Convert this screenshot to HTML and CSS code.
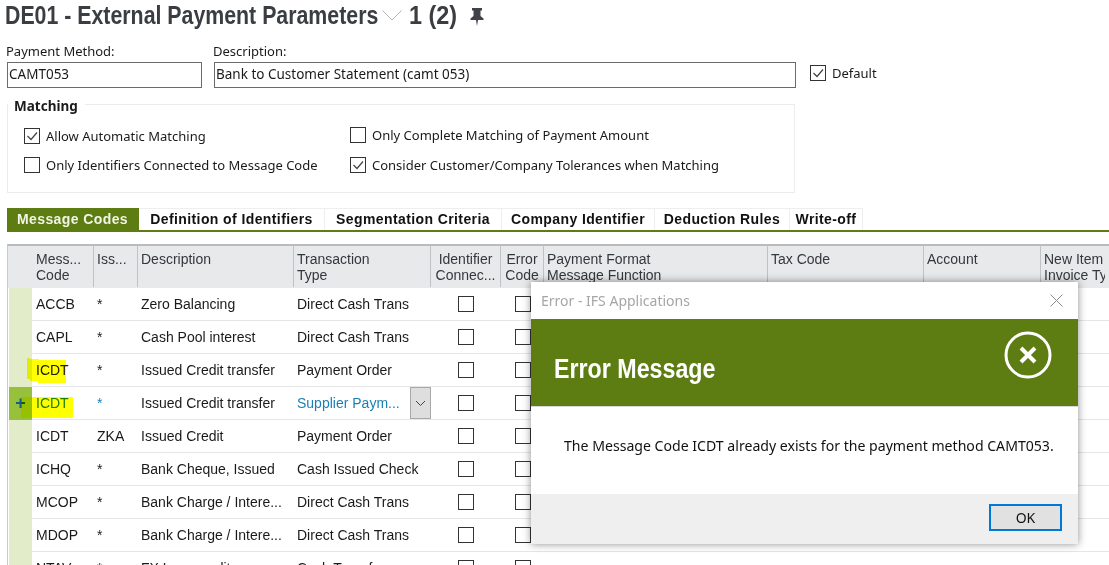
FILE: index.html
```html
<!DOCTYPE html>
<html>
<head>
  <link rel="stylesheet" href="styles.css">
</head>
<body>
  <div class="page">
    <div class="title-bar">
      <h1 class="title title-main">DE01 - External Payment Parameters</h1>
      <svg class="title-chevron" width="20" height="11" viewBox="0 0 20 11"><path d="M0.5 0.5 L10 10 L19.5 0.5" fill="none" stroke="#b5b5b5" stroke-width="1"/></svg>
      <span class="title title-count">1 (2)</span>
      <svg class="title-pin" width="14" height="18" viewBox="0 0 14 18"><path d="M2 0 H12 V2.5 H10.5 V8 L13.5 10.5 V12 H8 L7 18 L6 12 H0.5 V10.5 L3.5 8 V2.5 H2 Z" fill="#3f4246"/></svg>
    </div>

    <div class="head-form">
      <div class="field field-method">
        <label>Payment Method:</label>
        <div class="input">CAMT053</div>
      </div>
      <div class="field field-desc">
        <label>Description:</label>
        <div class="input">Bank to Customer Statement (camt 053)</div>
      </div>
      <div class="check default-check">
        <span class="cb"><svg width="14" height="14" viewBox="0 0 14 14"><path d="M2.5 7 L6 10.5 L12 3.5" fill="none" stroke="#444" stroke-width="1.2"/></svg></span>
        <span>Default</span>
      </div>
    </div>

    <div class="matching">
      <div class="legend">Matching</div>
      <div class="matching-cols">
        <div class="matching-col col-left">
          <div class="check">
            <span class="cb"><svg width="14" height="14" viewBox="0 0 14 14"><path d="M2.5 7 L6 10.5 L12 3.5" fill="none" stroke="#444" stroke-width="1.2"/></svg></span>
            <span>Allow Automatic Matching</span>
          </div>
          <div class="check">
            <span class="cb"></span>
            <span>Only Identifiers Connected to Message Code</span>
          </div>
        </div>
        <div class="matching-col col-right">
          <div class="check">
            <span class="cb"></span>
            <span>Only Complete Matching of Payment Amount</span>
          </div>
          <div class="check">
            <span class="cb"><svg width="14" height="14" viewBox="0 0 14 14"><path d="M2.5 7 L6 10.5 L12 3.5" fill="none" stroke="#444" stroke-width="1.2"/></svg></span>
            <span>Consider Customer/Company Tolerances when Matching</span>
          </div>
        </div>
      </div>
    </div>

    <div class="tabs">
      <div class="tab active tab-1">Message Codes</div>
      <div class="tab tab-2">Definition of Identifiers</div>
      <div class="tab tab-3">Segmentation Criteria</div>
      <div class="tab tab-4">Company Identifier</div>
      <div class="tab tab-5">Deduction Rules</div>
      <div class="tab tab-6">Write-off</div>
    </div>

    <div class="grid">
      <div class="grid-row grid-head">
        <div class="gutter"></div>
        <div class="th">Mess...<br>Code</div>
        <div class="th">Iss...</div>
        <div class="th">Description</div>
        <div class="th">Transaction<br>Type</div>
        <div class="th th-center">Identifier<br>Connec...</div>
        <div class="th th-center">Error<br>Code</div>
        <div class="th">Payment Format<br>Message Function</div>
        <div class="th">Tax Code</div>
        <div class="th">Account</div>
        <div class="th th-last">New Item<br>Invoice Type</div>
      </div>

      <div class="grid-row">
        <div class="gutter"></div><div class="td">ACCB</div><div class="td">*</div><div class="td">Zero Balancing</div><div class="td">Direct Cash Trans</div>
        <div class="td td-check"><span class="cb"></span></div><div class="td td-check"><span class="cb"></span></div>
      </div>
      <div class="grid-row">
        <div class="gutter"></div><div class="td">CAPL</div><div class="td">*</div><div class="td">Cash Pool interest</div><div class="td">Direct Cash Trans</div>
        <div class="td td-check"><span class="cb"></span></div><div class="td td-check"><span class="cb"></span></div>
      </div>
      <div class="grid-row">
        <div class="gutter"></div><div class="td">ICDT</div><div class="td">*</div><div class="td">Issued Credit transfer</div><div class="td">Payment Order</div>
        <div class="td td-check"><span class="cb"></span></div><div class="td td-check"><span class="cb"></span></div>
      </div>
      <div class="grid-row row-edit">
        <div class="gutter">+</div><div class="td td-link">ICDT</div><div class="td td-link">*</div><div class="td">Issued Credit transfer</div>
        <div class="td td-select">
          <span class="td-link">Supplier Paym...</span>
          <span class="select-btn"><svg width="11" height="7" viewBox="0 0 11 7"><path d="M1 1 L5.5 5.5 L10 1" fill="none" stroke="#444" stroke-width="1"/></svg></span>
        </div>
        <div class="td td-check"><span class="cb"></span></div><div class="td td-check"><span class="cb"></span></div>
      </div>
      <div class="grid-row">
        <div class="gutter"></div><div class="td">ICDT</div><div class="td">ZKA</div><div class="td">Issued Credit</div><div class="td">Payment Order</div>
        <div class="td td-check"><span class="cb"></span></div><div class="td td-check"><span class="cb"></span></div>
      </div>
      <div class="grid-row">
        <div class="gutter"></div><div class="td">ICHQ</div><div class="td">*</div><div class="td">Bank Cheque, Issued</div><div class="td">Cash Issued Check</div>
        <div class="td td-check"><span class="cb"></span></div><div class="td td-check"><span class="cb"></span></div>
      </div>
      <div class="grid-row">
        <div class="gutter"></div><div class="td">MCOP</div><div class="td">*</div><div class="td">Bank Charge / Intere...</div><div class="td">Direct Cash Trans</div>
        <div class="td td-check"><span class="cb"></span></div><div class="td td-check"><span class="cb"></span></div>
      </div>
      <div class="grid-row">
        <div class="gutter"></div><div class="td">MDOP</div><div class="td">*</div><div class="td">Bank Charge / Intere...</div><div class="td">Direct Cash Trans</div>
        <div class="td td-check"><span class="cb"></span></div><div class="td td-check"><span class="cb"></span></div>
      </div>
      <div class="grid-row">
        <div class="gutter"></div><div class="td">NTAV</div><div class="td">*</div><div class="td">FX Loss credit</div><div class="td">Cash Transfer</div>
        <div class="td td-check"><span class="cb"></span></div><div class="td td-check"><span class="cb"></span></div>
      </div>
    </div>

    <div class="marker marker-1"></div>
    <div class="marker marker-2"></div>

    <div class="dialog">
      <div class="dialog-title">
        <span>Error - IFS Applications</span>
        <svg width="13" height="13" viewBox="0 0 13 13"><path d="M0.5 0.5 L12.5 12.5 M12.5 0.5 L0.5 12.5" fill="none" stroke="#8a8a8a" stroke-width="1"/></svg>
      </div>
      <div class="dialog-banner">
        <div class="banner-text">Error Message</div>
        <svg class="banner-icon" width="48" height="48" viewBox="0 0 48 48"><circle cx="24" cy="24" r="22" fill="none" stroke="#fff" stroke-width="3"/><path d="M17 17 L31 31 M31 17 L17 31" fill="none" stroke="#fff" stroke-width="4"/></svg>
      </div>
      <div class="dialog-body">The Message Code ICDT already exists for the payment method CAMT053.</div>
      <div class="dialog-foot">
        <button class="ok-btn">OK</button>
      </div>
    </div>
  </div>
</body>
</html>
```

FILE: styles.css
```css
html, body {
  margin: 0;
  padding: 0;
  height: 565px;
  overflow: hidden;
  background: white;
}

.page {
  position: relative;
  width: 1109px;
  height: 565px;
  overflow: hidden;
  font-family: "Noto Sans", sans-serif;
  font-size: 13px;
  color: #1a1a1a;
}

.title-bar {
  display: flex;
  align-items: center;
  height: 30px;
  padding-left: 5px;
}

/* no condensed font here, so the bold sans is squeezed to fit */
.title {
  margin: 0;
  font-family: "Liberation Sans", sans-serif;
  font-size: 26px;
  font-weight: bold;
  color: #3a3d42;
  white-space: nowrap;
  transform-origin: left center;
}

.title-main {
  width: 372px;
  transform: scaleX(0.82);
}

.title-count {
  width: 49px;
  transform: scaleX(0.9);
}

.title-chevron {
  margin: 0 7px 0 5px;
}

.title-pin {
  margin: 3px 0 0 12px;
}

.head-form {
  display: flex;
  align-items: flex-start;
  padding: 13px 0 0 7px;
}

.field label {
  display: block;
  height: 19px;
  line-height: 17px;
  margin-left: -1px;
}

.field-method {
  width: 195px;
  margin-right: 12px;
}

.field-desc {
  width: 582px;
  margin-right: 14px;
}

.input {
  height: 24px;
  line-height: 22px;
  border: 1px solid #6b6b6b;
  padding-left: 1px;
  font-size: 13.5px;
  white-space: nowrap;
}

.check {
  display: flex;
  align-items: center;
  gap: 6px;
  line-height: 16px;
  white-space: nowrap;
}

.default-check {
  margin-top: 22px;
}

.cb {
  display: inline-flex;
  align-items: center;
  justify-content: center;
  box-sizing: border-box;
  width: 16px;
  height: 16px;
  border: 1px solid #333;
  background: white;
}

.matching {
  position: relative;
  box-sizing: border-box;
  width: 788px;
  height: 89px;
  margin: 16px 0 0 7px;
  border: 1px solid #ececec;
}

.legend {
  position: absolute;
  top: -7px;
  left: 0;
  padding: 0 7px 0 6px;
  background: white;
  font-size: 13.5px;
  font-weight: bold;
  line-height: 17px;
}

.matching-cols {
  display: flex;
  padding-top: 23px;
}

.matching-col {
  display: flex;
  flex-direction: column;
  gap: 13px;
}

.col-left {
  width: 326px;
  padding-left: 16px;
}

.col-right {
  margin-top: -1px;
  gap: 14px;
}

.tabs {
  display: flex;
  height: 22px;
  margin: 15px 0 0 7px;
  border-bottom: 2px solid #5d7d13;
}

.tab {
  box-sizing: border-box;
  height: 22px;
  line-height: 21px;
  text-align: center;
  font-family: "Liberation Sans", sans-serif;
  font-size: 14px;
  font-weight: bold;
  letter-spacing: 0.4px;
  color: #111;
  border-top: 1px solid #eee;
  border-right: 1px solid #eee;
  white-space: nowrap;
}

.tab.active {
  background: #5d7d13;
  border-color: #5d7d13;
  color: #f2f5e6;
}

.tab-1 { width: 132px; }
.tab-2 { width: 186px; }
.tab-3 { width: 177px; }
.tab-4 { width: 153px; }
.tab-5 { width: 135px; }
.tab-6 { width: 73px; }

.grid {
  width: 1102px;
  margin: 12px 0 0 7px;
  border-top: 2px solid #b9bbbe;
  border-left: 1px solid #c9cbce;
  font-family: "Liberation Sans", sans-serif;
  font-size: 14px;
}

.grid-row {
  display: grid;
  grid-template-columns: 23px 62px 44px 156px 137px 70px 43px 224px 156px 117px 64px 60px;
  height: 33px;
  margin-left: 1px;
  box-sizing: border-box;
  border-bottom: 1px solid #e6e6e6;
}

.grid-head {
  height: 42px;
  margin-left: 0;
  padding-left: 1px;
  background: #e8e9eb;
  border-bottom: 0;
  line-height: 16px;
  color: #33383d;
}

.th {
  padding: 5px 0 0 3px;
  margin-bottom: 1px;
  border-right: 1px solid #bfc1c4;
  white-space: nowrap;
  overflow: hidden;
}

.th:nth-child(2) {
  padding-left: 4px;
}

.th-center {
  padding-left: 0;
  text-align: center;
}

.th-last {
  border-right: 0;
}

.gutter {
  background: #e2ecc9;
  margin-bottom: -1px;
  text-align: center;
  font-weight: bold;
  color: #155f8a;
}

.grid-head .gutter {
  background: #e8e9eb;
  margin-bottom: 0;
  border: 0;
}

.row-edit .gutter {
  background: #97c13d;
  line-height: 33px;
  font-size: 18px;
}

.td {
  display: flex;
  align-items: center;
  padding-left: 3px;
  white-space: nowrap;
}

.td:nth-child(2) {
  padding-left: 4px;
}

.td-check {
  justify-content: center;
  padding-left: 0;
}

.td-link {
  color: #1b7fb5;
}

.td-select {
  justify-content: space-between;
  padding-right: 0;
}

.select-btn {
  display: flex;
  align-items: center;
  justify-content: center;
  box-sizing: border-box;
  width: 21px;
  height: 32px;
  background: #dedede;
  border: 1px solid #a8a8a8;
}

/* yellow highlighter drawn over the screenshot */
.marker {
  position: absolute;
  background: #ffff00;
  mix-blend-mode: multiply;
}

.marker-1 {
  left: 27px;
  top: 358px;
  width: 39px;
  height: 25px;
  clip-path: polygon(0 0, 8% 0, 8% 4%, 31% 4%, 31% 8%, 100% 8%, 100% 100%, 28% 100%, 28% 92%, 8% 92%, 8% 84%, 0 84%);
}

.marker-2 {
  left: 21px;
  top: 397px;
  width: 52px;
  height: 21px;
}

.dialog {
  position: absolute;
  left: 531px;
  top: 282px;
  width: 547px;
  height: 262px;
  display: flex;
  flex-direction: column;
  background: white;
  box-shadow: 0 0 8px rgba(0,0,0,0.45);
  font-family: "Noto Sans", sans-serif;
}

.dialog-title {
  display: flex;
  align-items: center;
  justify-content: space-between;
  height: 37px;
  padding: 0 15px 0 10px;
  font-size: 14px;
  color: #a6a6a6;
}

.dialog-banner {
  display: flex;
  align-items: center;
  justify-content: space-between;
  box-sizing: border-box;
  height: 88px;
  padding: 0 26px 0 23px;
  background: #5d7d13;
  border-bottom: 1px solid #d8d8d8;
}

.banner-text {
  width: 162px;
  margin-top: 12px;
  font-family: "Liberation Sans", sans-serif;
  font-size: 28px;
  font-weight: bold;
  color: white;
  white-space: nowrap;
  transform: scaleX(0.83);
  transform-origin: left center;
}

.banner-icon {
  margin-top: -16px;
}

.dialog-body {
  display: flex;
  align-items: center;
  box-sizing: border-box;
  height: 87px;
  padding: 0 0 10px 33px;
  font-size: 14.1px;
  color: #111;
  white-space: nowrap;
}

.dialog-foot {
  flex: 1;
  display: flex;
  justify-content: flex-end;
  align-items: flex-start;
  padding: 10px 16px 0 0;
  background: #efefef;
}

.ok-btn {
  box-sizing: border-box;
  width: 73px;
  height: 27px;
  padding: 0;
  background: #e1e1e1;
  border: 2px solid #0078d7;
  font-family: "Noto Sans", sans-serif;
  font-size: 14px;
  color: #111;
}
```
